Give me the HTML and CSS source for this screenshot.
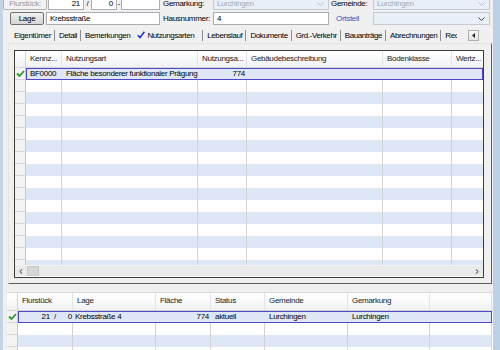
FILE: index.html
```html
<!DOCTYPE html>
<html>
<head>
<meta charset="utf-8">
<title>Flurstück</title>
<link rel="stylesheet" href="styles.css">
</head>
<body>
<div class="window">
  <div class="frow r1">
    <div class="btn dis w-flur">Flurstück:</div>
    <div class="inp num w-21">21</div>
    <span class="sep w-slash">/</span>
    <div class="inp num w-0">0</div>
    <span class="sep w-dot">-</span>
    <div class="inp w-ext"></div>
    <span class="lbl w-lbl">Gemarkung:</span>
    <div class="combo dis w-mid">Lurchingen<svg class="arr" width="7" height="4" viewBox="0 0 7 4"><path d="M0.5 0.5 L3.5 3.5 L6.5 0.5" fill="none" stroke="#b8bcc4" stroke-width="1"/></svg></div>
    <span class="lbl w-lbl2">Gemeinde:</span>
    <div class="combo dis w-right">Lurchingen<svg class="arr" width="7" height="4" viewBox="0 0 7 4"><path d="M0.5 0.5 L3.5 3.5 L6.5 0.5" fill="none" stroke="#b8bcc4" stroke-width="1"/></svg></div>
  </div>
  <div class="frow r2">
    <div class="btn w-lage">Lage</div>
    <div class="inp w-street">Krebsstraße</div>
    <span class="lbl w-lbl">Hausnummer:</span>
    <div class="inp w-mid">4</div>
    <span class="lbl link w-lbl2">Ortsteil</span>
    <div class="combo w-right"><svg class="arr" width="7" height="4" viewBox="0 0 7 4"><path d="M0.5 0.5 L3.5 3.5 L6.5 0.5" fill="none" stroke="#444" stroke-width="1"/></svg></div>
  </div>
  <div class="tabs">
    <div class="tablist">
      <span class="tab">Eigentümer</span>
      <span class="tab">Detail</span>
      <span class="tab nosep">Bemerkungen</span>
      <span class="tab active"><svg width="8" height="8" viewBox="0 0 8 8"><path d="M0.8 4.2 L3 6.6 L7.4 0.8" fill="none" stroke="#1a36d6" stroke-width="1.6"/></svg>Nutzungsarten</span>
      <span class="tab">Lebenslauf</span>
      <span class="tab">Dokumente</span>
      <span class="tab">Grd.-Verkehr</span>
      <span class="tab">Bauanträge</span>
      <span class="tab">Abrechnungen</span>
      <span class="tab">Rechnungen</span>
    </div>
    <div class="tabscroll"><svg width="4" height="5" viewBox="0 0 4 5"><path d="M3 0 L0 2.5 L3 5 Z" fill="#222"/></svg></div>
  </div>
  <div class="tabpage">
    <div class="grid g1">
      <div class="ghead">
        <div class="rh"></div>
        <div class="hc">Kennz...</div>
        <div class="hc">Nutzungsart</div>
        <div class="hc">Nutzungsa...</div>
        <div class="hc">Gebäudebeschreibung</div>
        <div class="hc">Bodenklasse</div>
        <div class="hc last">Wertz...</div>
      </div>
      <div class="gbody">
        <div class="row cur">
          <div class="rh"><svg width="9" height="7" viewBox="0 0 9 7"><path d="M1 3.5 L3.5 6 L8 1" fill="none" stroke="#2a9d2a" stroke-width="1.8"/></svg></div>
          <div class="c first">BF0000</div>
          <div class="c">Fläche besonderer funktionaler Prägung</div>
          <div class="c num">774</div>
          <div class="c"></div>
          <div class="c"></div>
          <div class="c end"></div>
        </div>
        <div class="row"><div class="rh"></div><div class="c"></div><div class="c"></div><div class="c"></div><div class="c"></div><div class="c"></div><div class="c last"></div></div>
        <div class="row alt"><div class="rh"></div><div class="c"></div><div class="c"></div><div class="c"></div><div class="c"></div><div class="c"></div><div class="c last"></div></div>
        <div class="row"><div class="rh"></div><div class="c"></div><div class="c"></div><div class="c"></div><div class="c"></div><div class="c"></div><div class="c last"></div></div>
        <div class="row alt"><div class="rh"></div><div class="c"></div><div class="c"></div><div class="c"></div><div class="c"></div><div class="c"></div><div class="c last"></div></div>
        <div class="row"><div class="rh"></div><div class="c"></div><div class="c"></div><div class="c"></div><div class="c"></div><div class="c"></div><div class="c last"></div></div>
        <div class="row alt"><div class="rh"></div><div class="c"></div><div class="c"></div><div class="c"></div><div class="c"></div><div class="c"></div><div class="c last"></div></div>
        <div class="row"><div class="rh"></div><div class="c"></div><div class="c"></div><div class="c"></div><div class="c"></div><div class="c"></div><div class="c last"></div></div>
        <div class="row alt"><div class="rh"></div><div class="c"></div><div class="c"></div><div class="c"></div><div class="c"></div><div class="c"></div><div class="c last"></div></div>
        <div class="row"><div class="rh"></div><div class="c"></div><div class="c"></div><div class="c"></div><div class="c"></div><div class="c"></div><div class="c last"></div></div>
        <div class="row alt"><div class="rh"></div><div class="c"></div><div class="c"></div><div class="c"></div><div class="c"></div><div class="c"></div><div class="c last"></div></div>
        <div class="row"><div class="rh"></div><div class="c"></div><div class="c"></div><div class="c"></div><div class="c"></div><div class="c"></div><div class="c last"></div></div>
        <div class="row alt"><div class="rh"></div><div class="c"></div><div class="c"></div><div class="c"></div><div class="c"></div><div class="c"></div><div class="c last"></div></div>
        <div class="row"><div class="rh"></div><div class="c"></div><div class="c"></div><div class="c"></div><div class="c"></div><div class="c"></div><div class="c last"></div></div>
        <div class="row alt"><div class="rh"></div><div class="c"></div><div class="c"></div><div class="c"></div><div class="c"></div><div class="c"></div><div class="c last"></div></div>
        <div class="row"><div class="rh"></div><div class="c"></div><div class="c"></div><div class="c"></div><div class="c"></div><div class="c"></div><div class="c last"></div></div>
        <div class="row alt"><div class="rh"></div><div class="c"></div><div class="c"></div><div class="c"></div><div class="c"></div><div class="c"></div><div class="c last"></div></div>
      </div>
      <div class="hscroll">
        <div class="sbtn"><svg width="4" height="5" viewBox="0 0 4 5"><path d="M3.2 0.3 L0.8 2.5 L3.2 4.7" fill="none" stroke="#333" stroke-width="1"/></svg></div>
        <div class="thumb"></div>
        <div class="strack"></div>
        <div class="sbtn"><svg width="4" height="5" viewBox="0 0 4 5"><path d="M0.8 0.3 L3.2 2.5 L0.8 4.7" fill="none" stroke="#333" stroke-width="1"/></svg></div>
      </div>
    </div>
  </div>
  <div class="grid g2">
    <div class="ghead">
      <div class="rh"></div>
      <div class="hc">Flurstück</div>
      <div class="hc">Lage</div>
      <div class="hc">Fläche</div>
      <div class="hc">Status</div>
      <div class="hc">Gemeinde</div>
      <div class="hc">Gemarkung</div>
      <div class="hc"></div>
      <div class="hc last"></div>
    </div>
    <div class="gbody">
      <div class="row cur">
        <div class="rh"><svg width="9" height="7" viewBox="0 0 9 7"><path d="M1 3.5 L3.5 6 L8 1" fill="none" stroke="#2a9d2a" stroke-width="1.8"/></svg></div>
        <div class="c first fl"><span>21</span><span>/</span><span class="fl0">0</span></div>
        <div class="c tight">Krebsstraße 4</div>
        <div class="c num">774</div>
        <div class="c">aktuell</div>
        <div class="c">Lurchingen</div>
        <div class="c">Lurchingen</div>
        <div class="c end"></div>
        <div class="c last"></div>
      </div>
      <div class="row"><div class="rh"></div><div class="c"></div><div class="c"></div><div class="c"></div><div class="c"></div><div class="c"></div><div class="c"></div><div class="c"></div><div class="c last"></div></div>
      <div class="row alt"><div class="rh"></div><div class="c"></div><div class="c"></div><div class="c"></div><div class="c"></div><div class="c"></div><div class="c"></div><div class="c"></div><div class="c last"></div></div>
      <div class="row"><div class="rh"></div><div class="c"></div><div class="c"></div><div class="c"></div><div class="c"></div><div class="c"></div><div class="c"></div><div class="c"></div><div class="c last"></div></div>
    </div>
  </div>
</div>
</body>
</html>
```

FILE: styles.css
```css
* { box-sizing: border-box; }

html, body {
  margin: 0;
  padding: 0;
}

body {
  width: 500px;
  height: 350px;
  overflow: hidden;
  background: #f0f0f0;
  font-family: "Liberation Sans", Arial, sans-serif;
  font-size: 8px;
  letter-spacing: -0.3px;
  color: #000;
}

.window {
  height: 350px;
  display: flex;
  flex-direction: column;
  border-left: 3px solid #c4d4e7;
  border-right: 7px solid #bcd0e6;
  overflow: hidden;
}

/* form rows */
.frow {
  display: flex;
  align-items: center;
  height: 13px;
  flex: 0 0 auto;
}
.r1 { margin-top: -3px; }
.r2 { margin-top: 2px; }

.inp, .combo, .btn {
  height: 13px;
  line-height: 11px;
  white-space: nowrap;
  overflow: hidden;
}
.inp {
  border: 1px solid #abadb3;
  background: #fff;
  padding: 0 3px;
}
.inp.num { text-align: right; }
.combo {
  border: 1px solid #c3cad4;
  background: #e9eff7;
  padding: 0 3px;
  display: flex;
  align-items: center;
}
.combo.dis { color: #a3a9b3; }
.combo .arr { margin-left: auto; margin-right: 1px; }
.btn {
  border: 1px solid #707070;
  border-radius: 2px;
  background: linear-gradient(#f3f3f3, #e2e2e2 50%, #d7d7d7);
  text-align: center;
}
.btn.dis {
  border-color: #b5b5b5;
  background: #f2f2f2;
  color: #9a9a9a;
}
.sep { text-align: center; }
.lbl { white-space: nowrap; }
.lbl.link { color: #1f60c8; }

.w-flur { width: 44px; margin-right: 1px; }
.w-21 { width: 36px; }
.w-slash { width: 7px; }
.w-0 { width: 26px; }
.w-dot { width: 4px; }
.w-ext { width: 39px; }
.w-lbl { width: 53px; padding-left: 3px; }
.w-mid { width: 116px; }
.w-lbl2 { width: 44px; padding-left: 2px; }
.link.w-lbl2 { padding-left: 7px; }
.w-right { width: 117px; }
.w-lage { width: 34px; margin-left: 7px; margin-right: 2px; }
.w-street { width: 114px; }

/* tabs */
.tabs {
  display: flex;
  align-items: center;
  height: 14px;
  margin-top: 3px;
  padding-left: 7px;
  flex: 0 0 auto;
}
.tablist {
  display: flex;
  align-items: center;
  width: 447px;
  overflow: hidden;
  white-space: nowrap;
  letter-spacing: -0.4px;
}
.tab {
  flex: 0 0 auto;
  padding: 0 3px 0 4px;
  line-height: 11px;
  border-right: 1px solid #8d8d8d;
  display: flex;
  align-items: center;
}
.tab.nosep { border-right: none; padding-right: 3px; }
.tab.active { padding-left: 4px; padding-right: 8px; }
.tab.active svg { margin-right: 2px; }
.tabscroll {
  width: 11px;
  height: 11px;
  margin-left: 11px;
  border: 1px solid #b0b0b0;
  background: linear-gradient(#fafafa, #e4e4e4);
  display: flex;
  align-items: center;
  justify-content: center;
}

.tabpage {
  flex: 0 0 auto;
  margin: 1px 1px 0 5px;
  width: 484px;
  height: 241px;
  border: 1px solid #5e5e5e;
  border-top-color: #e4e4e4;
  border-left-color: #e4e4e4;
  padding: 6px 7px 5px 5px;
  display: flex;
}

/* grids */
.grid {
  display: flex;
  flex-direction: column;
  background: #fff;
}
.g1 {
  flex: 1 1 auto;
  border: 1px solid #3c3c3c;
}
.ghead, .row {
  display: grid;
  flex: 0 0 auto;
}
.g1 .ghead, .g1 .row {
  grid-template-columns: 11px 36px 136px 49px 136px 69px 1fr;
}
.g2 .ghead, .g2 .row {
  grid-template-columns: 11px 55px 83px 55px 54px 83px 82px 62px 1fr;
}
.ghead {
  height: 18px;
  background: linear-gradient(#ffffff, #f7f8f9 60%, #f0f1f2);
  border-bottom: 1px solid #d5d5d5;
}
.g1 .ghead { height: 17px; }
.hc {
  padding: 0 4px;
  line-height: 16px;
  white-space: nowrap;
  overflow: hidden;
  border-right: 1px solid #e3e3e3;
  color: #1a1a1a;
}
.hc.last { border-right: none; }
.ghead .rh { border-right: 1px solid #d5d5d5; }

.gbody {
  flex: 1 1 auto;
  overflow: hidden;
}
.g1 .gbody { height: 197px; flex: 0 0 197px; }

.row { height: 12px; }
.row .rh {
  background: #f3f3f3;
  border-right: 1px solid #c8c8c8;
  border-bottom: 1px solid #d6d6d6;
  display: flex;
  align-items: center;
  justify-content: center;
}
.c {
  border-right: 1px solid #d3d3d3;
  padding: 0 4px;
  line-height: 11px;
  white-space: nowrap;
  overflow: hidden;
}
.c.last { border-right: none; }
.row.alt .c { background: #dde7f6; }
.g2 .row.alt .c.last { background: #fff; }
.c.num { text-align: right; padding-right: 2px; }

.row.cur .c {
  background: #dfe7f6;
  border-top: 1px solid #4d47c9;
  border-bottom: 1px solid #4d47c9;
  border-right: none;
  line-height: 10px;
}
.row.cur .c.first { border-left: 1px solid #4d47c9; padding-left: 3px; }
.row.cur .c.end { border-right: 1px solid #4d47c9; }
.row.cur .c.last { background: #fff; border-top: none; border-bottom: none; }

.hscroll {
  flex: 0 0 auto;
  height: 11px;
  display: flex;
  background: #eaeaea;
  border-top: 1px solid #f4f4f4;
}
.sbtn {
  width: 12px;
  display: flex;
  align-items: center;
  justify-content: center;
}
.thumb {
  width: 12px;
  background: #d6d6d6;
  border: 1px solid #c9c9c9;
}
.strack { flex: 1 1 auto; }

/* bottom grid */
.g2 {
  flex: 1 1 auto;
  margin: 8px 0 0 4px;
  border-top: 1px solid #d9d9d9;
}
.g2 .c.fl {
  display: flex;
  justify-content: flex-end;
  gap: 4px;
  padding-right: 1px;
}
.g2 .c.fl .fl0 { margin-left: 8px; }
.g2 .c.tight { padding-left: 2px; }
```
